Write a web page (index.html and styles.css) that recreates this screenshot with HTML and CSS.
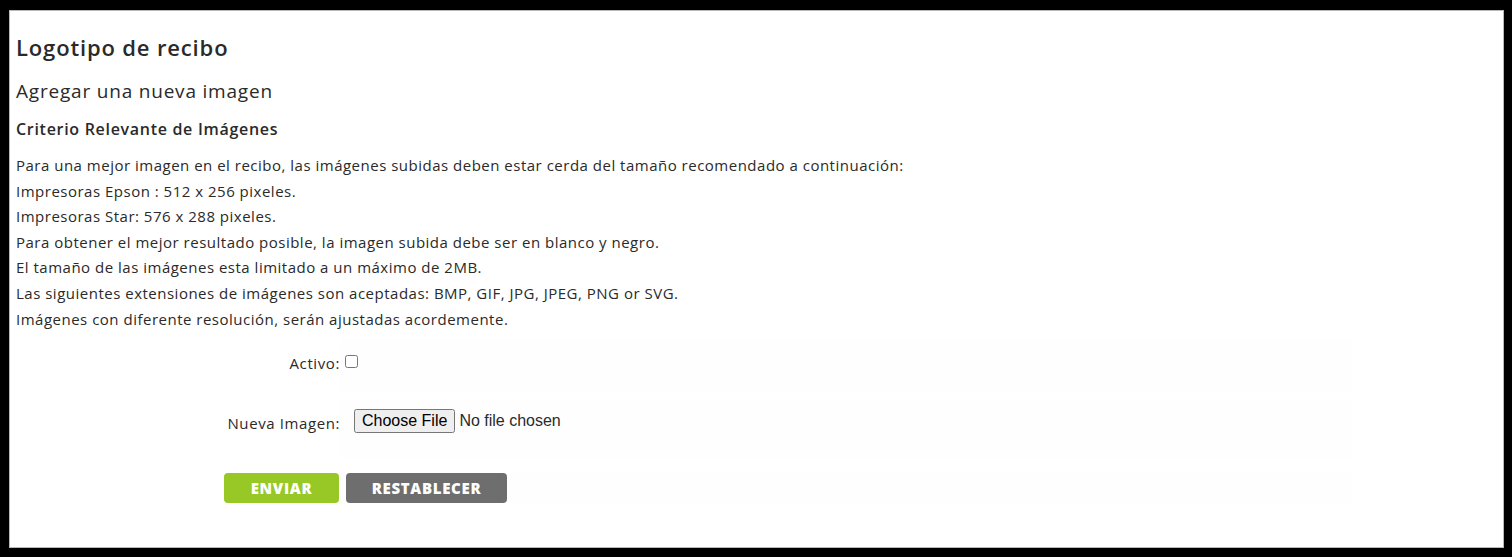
FILE: index.html
```html
<!DOCTYPE html>
<html lang="es">
<head>
    <meta charset="UTF-8">
    <meta name="viewport" content="width=device-width, initial-scale=1.0">
    <title>Logotipo de recibo</title>
    <link rel="stylesheet" href="styles.css">
</head>
<body>
    <div class="page">
        <h1>Logotipo de recibo</h1>
        <h2>Agregar una nueva imagen</h2>
        <h3>Criterio Relevante de Imágenes</h3>
        <div class="criteria">
            <p>Para una mejor imagen en el recibo, las imágenes subidas deben estar cerda del tamaño recomendado a continuación:</p>
            <p>Impresoras Epson : 512 x 256 pixeles.</p>
            <p>Impresoras Star: 576 x 288 pixeles.</p>
            <p>Para obtener el mejor resultado posible, la imagen subida debe ser en blanco y negro.</p>
            <p>El tamaño de las imágenes esta limitado a un máximo de 2MB.</p>
            <p>Las siguientes extensiones de imágenes son aceptadas: BMP, GIF, JPG, JPEG, PNG or SVG.</p>
            <p>Imágenes con diferente resolución, serán ajustadas acordemente.</p>
        </div>
        <form class="logo-form" action="#" method="post">
            <div class="form-row">
                <label for="activo" class="form-label">Activo:</label>
                <div class="form-field">
                    <input type="checkbox" id="activo" name="activo">
                </div>
            </div>
            <div class="form-row">
                <label for="imagen" class="form-label">Nueva Imagen:</label>
                <div class="form-field file-field">
                    <input type="file" id="imagen" name="imagen">
                </div>
            </div>
            <div class="form-actions">
                <button type="submit" class="btn btn-send">ENVIAR</button>
                <button type="reset" class="btn btn-reset">RESTABLECER</button>
            </div>
        </form>
    </div>
</body>
</html>
```

FILE: styles.css
```css
body {
    margin: 0;
    background: #000;
    font-family: 'Open Sans', sans-serif;
    color: #2a2a2a;
    padding: 10px 8px 9px 9px;
}

.page {
    background: #fff;
    border: 1px solid #b9b9b9;
    height: 538px;
    box-sizing: border-box;
    padding: 0 6px;
}

h1 {
    font-size: 22px;
    font-weight: 600;
    margin: 0;
    padding-top: 22px;
    line-height: 28px;
    letter-spacing: 0.85px;
}

h2 {
    font-size: 19px;
    font-weight: 400;
    margin: 18px 0 0;
    line-height: 24px;
    letter-spacing: 0.8px;
}

h3 {
    font-size: 16px;
    font-weight: 600;
    margin: 16px 0 0;
    line-height: 20px;
    letter-spacing: 0.7px;
}

.criteria {
    margin-top: 14px;
    font-size: 15px;
    letter-spacing: 0.5px;
}

.criteria p {
    margin: 0;
    line-height: 25.6px;
}

.logo-form {
    margin-top: 7px;
    font-size: 15px;
}

.form-row {
    display: grid;
    grid-template-columns: 324px 1012px;
    height: 52px;
}

.form-row + .form-row {
    height: 60px;
    padding-top: 8px;
}

.form-label {
    text-align: right;
    padding-top: 14px;
    letter-spacing: 0.6px;
}

.form-field {
    background: #fefefe;
    padding: 13px 0 0 5px;
}

.form-field input[type="checkbox"] {
    margin: 0;
    width: 13px;
    height: 13px;
}

.file-field {
    padding: 10px 0 0 14px;
}

.file-field input {
    font-family: 'Liberation Sans', sans-serif;
    font-size: 16px;
}

.form-actions {
    display: flex;
    gap: 7px;
    margin: 14px 0 0 208px;
    background: #fefefe;
    width: 1128px;
}

.btn {
    border: none;
    border-radius: 4px;
    color: #fff;
    font-family: 'Open Sans', sans-serif;
    font-size: 15px;
    font-weight: 800;
    letter-spacing: 0.7px;
    height: 30px;
    cursor: pointer;
}

.btn-send {
    background: #97c825;
    width: 115px;
}

.btn-reset {
    background: #6e6e6e;
    width: 161px;
}
```
